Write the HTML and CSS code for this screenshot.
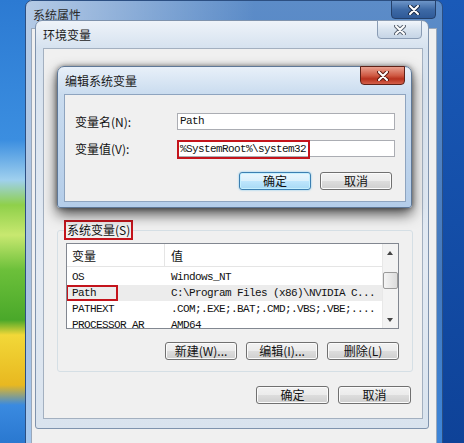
FILE: index.html
```html
<!DOCTYPE html>
<html lang="zh-CN">
<head>
  <meta charset="UTF-8" />
  <title>编辑系统变量</title>
  <link rel="stylesheet" href="styles.css">
</head>
<body>
<div class="desktop">

  <div class="win sysprop">
    <div class="titlebar">
      <span class="title">系统属性</span>
      <div class="close dark">
        <svg width="12" height="10" viewBox="0 0 12 10"><path d="M2 1 L10 9 M10 1 L2 9" stroke="#1c2e4a" stroke-width="4" stroke-linecap="round"/><path d="M2 1 L10 9 M10 1 L2 9" stroke="#fff" stroke-width="2" stroke-linecap="round"/></svg>
      </div>
    </div>
    <div class="client"></div>
  </div>

  <div class="win env">
    <div class="titlebar">
      <span class="title">环境变量</span>
      <div class="close light">
        <svg width="12" height="10" viewBox="0 0 12 10"><path d="M2 1 L10 9 M10 1 L2 9" stroke="#5a6472" stroke-width="4" stroke-linecap="round"/><path d="M2 1 L10 9 M10 1 L2 9" stroke="#fff" stroke-width="2" stroke-linecap="round"/></svg>
      </div>
    </div>
    <div class="client">
      <fieldset class="group">
        <legend class="mark">系统变量(S)</legend>
        <div class="listview">
          <div class="lv-main">
            <div class="lv-head">
              <span class="c1">变量</span>
              <span class="c2">值</span>
            </div>
            <div class="lv-row"><span class="c1 mono">OS</span><span class="c2 mono">Windows_NT</span></div>
            <div class="lv-row sel"><span class="c1 mono"><span class="mark path-mark">Path</span></span><span class="c2 mono">C:\Program Files (x86)\NVIDIA C...</span></div>
            <div class="lv-row"><span class="c1 mono">PATHEXT</span><span class="c2 mono">.COM;.EXE;.BAT;.CMD;.VBS;.VBE;....</span></div>
            <div class="lv-row"><span class="c1 mono">PROCESSOR_AR</span><span class="c2 mono">AMD64</span></div>
          </div>
          <div class="vscroll">
            <div class="arrow up"></div>
            <div class="thumb"></div>
            <div class="arrow down"></div>
          </div>
        </div>
        <div class="btn-row">
          <button class="btn">新建(W)...</button>
          <button class="btn">编辑(I)...</button>
          <button class="btn">删除(L)</button>
        </div>
      </fieldset>
      <div class="btn-row bottom">
        <button class="btn">确定</button>
        <button class="btn">取消</button>
      </div>
    </div>
  </div>

  <div class="win edit">
    <div class="titlebar">
      <span class="title">编辑系统变量</span>
      <div class="close red">
        <svg width="12" height="10" viewBox="0 0 12 10"><path d="M2 1 L10 9 M10 1 L2 9" stroke="#5a1a12" stroke-width="4" stroke-linecap="round"/><path d="M2 1 L10 9 M10 1 L2 9" stroke="#fff" stroke-width="2" stroke-linecap="round"/></svg>
      </div>
    </div>
    <div class="client">
      <div class="form">
        <span>变量名(N):</span>
        <div class="input mono">Path</div>
        <span>变量值(V):</span>
        <div class="input mono"><span class="mark val-mark">%SystemRoot%\system32</span></div>
      </div>
      <div class="btn-row edit-btns">
        <button class="btn default">确定</button>
        <button class="btn">取消</button>
      </div>
    </div>
  </div>

</div>
</body>
</html>
```

FILE: styles.css
```css
* {
  box-sizing: border-box;
}
body {
  margin: 0;
  font-family: "Noto Sans CJK SC", sans-serif;
  font-size: 12px;
  color: #111;
}
.desktop {
  position: relative;
  width: 464px;
  height: 443px;
  overflow: hidden;
  background:
    linear-gradient(180deg, #2c7ad2 0, #3b8ee0 140px, #9fd0ee 180px, #8fd04a 205px, #c8e870 235px, #6cc03a 270px, #4aa82a 320px, #f2d838 335px, #e8b820 385px, #3a8ae0 405px, #2a78d0 443px) left top / 30px 100% no-repeat,
    linear-gradient(180deg, #1a5ab8, #0e4298) right top / 30px 100% no-repeat;
}
.mono {
  font-family: "Liberation Mono", monospace;
  font-size: 11px;
  letter-spacing: -0.6px;
}
.mark {
  border: 2px solid #c4141c;
}

/* windows */
.win {
  position: absolute;
  display: flex;
  flex-direction: column;
  border-radius: 7px 7px 3px 3px;
}
.titlebar {
  height: 27px;
  display: flex;
  padding-left: 7px;
}
.title {
  align-self: center;
  font-size: 12px;
  color: #1a1a1a;
}
.close {
  margin-left: auto;
  margin-right: 6px;
  margin-top: -1px;
  width: 45px;
  height: 19px;
  border-radius: 0 0 4px 4px;
  display: flex;
  align-items: center;
  justify-content: center;
}
.close.dark {
  background: linear-gradient(180deg, #6d95c8, #3e6aa6 50%, #2f5a98);
  border: 1px solid #24406a;
}
.close.light {
  background: linear-gradient(180deg, #f2f6fb, #d8e3ef 50%, #c6d5e6);
  border: 1px solid #8a9cb4;
}
.close.red {
  background: linear-gradient(180deg, #e9a08e, #cf5a44 50%, #b8321e 70%, #d4604a);
  border: 1px solid #5e2218;
}
.client {
  flex: 1;
  background: #f0f0f0;
  border: 1px solid #9aa8ba;
}

.sysprop {
  left: 25px;
  top: 0;
  width: 418px;
  height: 460px;
  border: 1px solid #2c4f82;
  background:
    linear-gradient(90deg, rgba(255, 255, 255, 0.55), rgba(255, 255, 255, 0) 55%),
    linear-gradient(180deg, #5c8cc8, #4379be 60%, #3d85d8 96%, #2a68b8);
}
.sysprop .title {
  color: #2a2a2a;
}
.sysprop .client {
  margin: 0 5px 8px 5px;
}

.env {
  left: 35px;
  top: 20px;
  width: 394px;
  height: 409px;
  border: 1px solid #7f93ad;
  background: linear-gradient(180deg, #eef3f9, #d6e2ef 27px, #e3eaf3 60%, #d9e3ee);
}
.env .client {
  margin: 0 5px 9px 7px;
  border-color: #a3b0c0;
}

.edit {
  left: 57px;
  top: 66px;
  width: 355px;
  height: 142px;
  border: 1px solid #5f7897;
  background: linear-gradient(180deg, #e8f0f9, #cadcef 27px, #b4cde9);
  box-shadow: 0 6px 14px rgba(0, 0, 0, 0.7), 0 0 5px rgba(0, 0, 0, 0.45);
}
.edit .client {
  margin: 0 5px 5px 6px;
  border-color: #8ea4bf;
}

/* env contents */
.group {
  margin: 171px 9px 0 13px;
  padding: 0 13px 11px 8px;
  min-width: 0;
  border: 1px solid #d5dfe5;
  border-radius: 3px;
}
.group legend {
  margin-left: -2px;
  padding: 0 1px;
  height: 20px;
  line-height: 16px;
}
.listview {
  display: flex;
  height: 86px;
  margin: 3px 0 0 0;
  border: 1px solid #828790;
  background: #fff;
}
.lv-main {
  flex: 1;
  min-width: 0;
  overflow: hidden;
}
.lv-head {
  display: flex;
  height: 23px;
  align-items: center;
  border-bottom: 1px solid #e5e5e5;
  margin-bottom: 2px;
}
.lv-head .c1 {
  align-self: stretch;
  display: flex;
  align-items: center;
  border-right: 1px solid #e5e5e5;
}
.lv-row {
  display: flex;
  height: 16px;
  align-items: center;
  white-space: nowrap;
}
.lv-row.sel {
  background: #ececec;
}
.c1 {
  width: 98px;
  flex: none;
  padding-left: 5px;
}
.c2 {
  padding-left: 6px;
}
.path-mark {
  display: inline-block;
  height: 16px;
  line-height: 12px;
  margin-left: -6px;
  padding: 0 20px 0 4px;
}
.vscroll {
  width: 16px;
  flex: none;
  display: flex;
  flex-direction: column;
  background: #f3f3f3;
  border-left: 1px solid #e8e8e8;
}
.arrow {
  height: 17px;
  position: relative;
}
.arrow::after {
  content: "";
  position: absolute;
  left: 4px;
  top: 7px;
  border-left: 3.5px solid transparent;
  border-right: 3.5px solid transparent;
}
.arrow.up::after {
  border-bottom: 4px solid #444;
}
.arrow.down {
  margin-top: auto;
}
.arrow.down::after {
  border-top: 4px solid #444;
}
.thumb {
  height: 17px;
  margin: 11px 0 0 0;
  border: 1px solid #9a9a9a;
  border-radius: 2px;
  background: linear-gradient(90deg, #f4f4f4, #dcdcdc);
}
.btn-row {
  display: flex;
  justify-content: flex-end;
  gap: 9px;
  margin-top: 13px;
}
.btn-row.bottom {
  margin-top: 14px;
  padding-right: 11px;
}
.btn {
  width: 72px;
  height: 18px;
  padding: 0;
  font-family: inherit;
  font-size: 12px;
  line-height: 16px;
  color: #111;
  border: 1px solid #707070;
  border-radius: 3px;
  background: linear-gradient(180deg, #f2f2f2 0, #ebebeb 50%, #dddddd 51%, #cfcfcf 100%);
  box-shadow: inset 0 0 0 1px #fbfbfb;
}
.btn-row.bottom .btn {
  width: 73px;
}
.btn.default {
  border-color: #3c7fb1;
  background: linear-gradient(180deg, #eaf6fd 0, #d9f0fc 50%, #bee6fd 51%, #a7d9f5 100%);
  box-shadow: inset 0 0 0 1px #c4efff, 0 0 2px #6cc3ee;
}

/* edit contents */
.form {
  display: grid;
  grid-template-columns: 102px 218px;
  row-gap: 10px;
  align-items: center;
  padding: 18px 0 0 10px;
}
.input {
  height: 17px;
  border: 1px solid #abadb3;
  background: #fff;
  padding-left: 2px;
  line-height: 15px;
}
.val-mark {
  display: inline-block;
  height: 19px;
  margin: -1px 0 0 -3px;
  padding: 0 2px 0 1px;
  line-height: 15px;
}
.edit-btns {
  margin-top: 15px;
  padding-right: 13px;
}
```
